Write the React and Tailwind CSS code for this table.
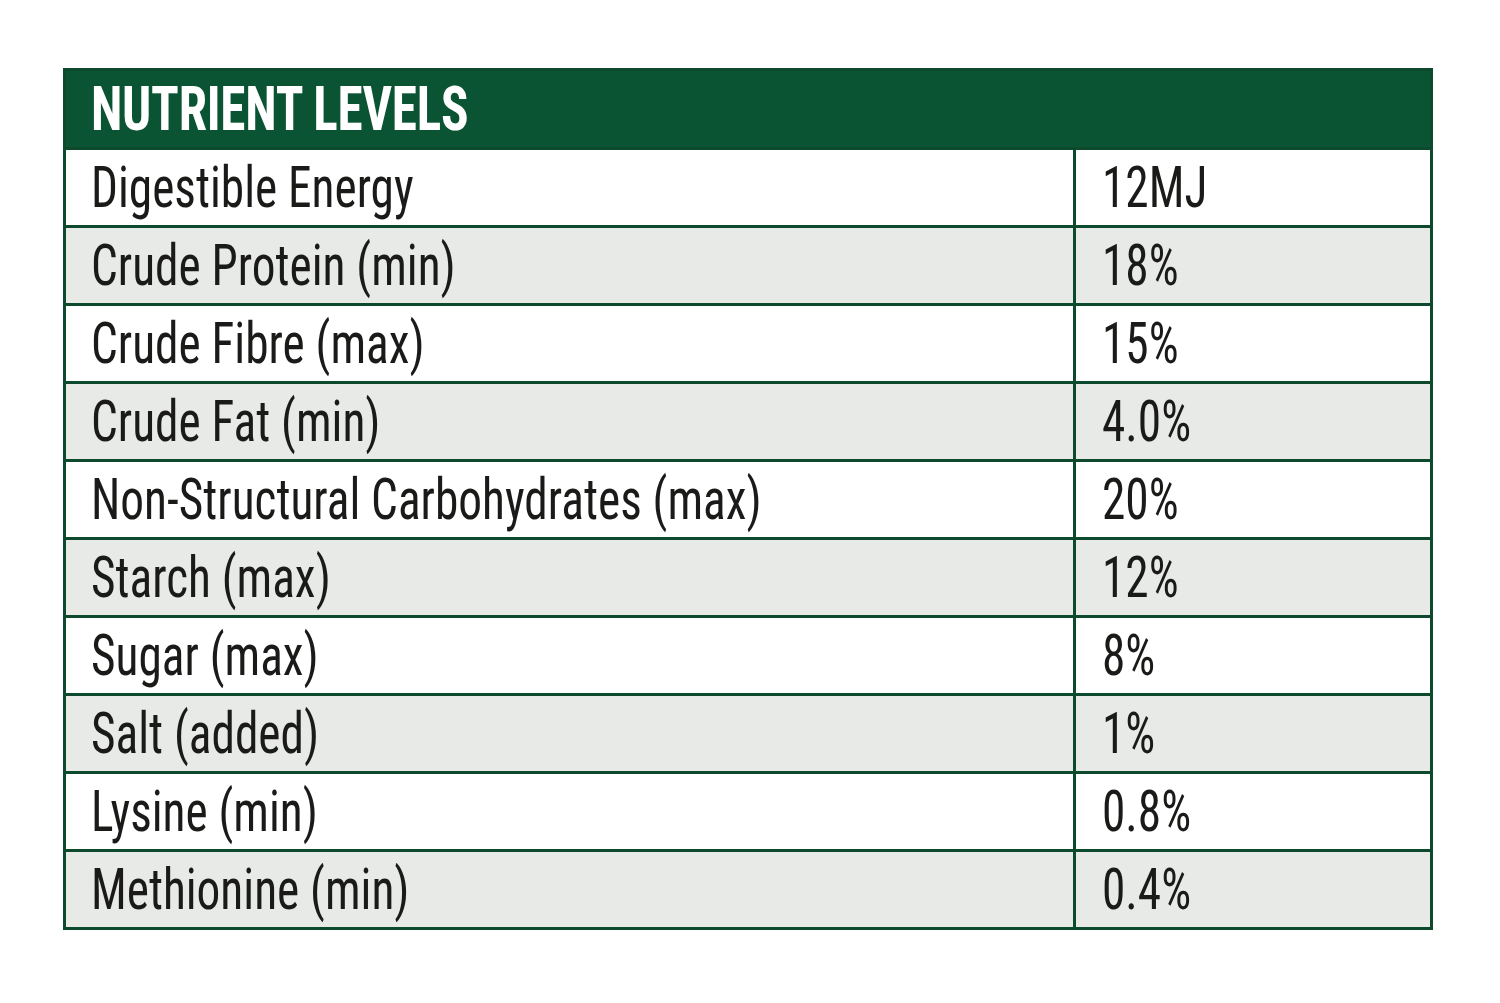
const rows = [
  ['Digestible Energy', '12MJ'],
  ['Crude Protein (min)', '18%'],
  ['Crude Fibre (max)', '15%'],
  ['Crude Fat (min)', '4.0%'],
  ['Non-Structural Carbohydrates (max)', '20%'],
  ['Starch (max)', '12%'],
  ['Sugar (max)', '8%'],
  ['Salt (added)', '1%'],
  ['Lysine (min)', '0.8%'],
  ['Methionine (min)', '0.4%'],
];

export default function App() {
  return (
    <div className="w-[1500px] h-[1003px] bg-white pt-[68px] pl-[63px] font-['Roboto_Condensed','Roboto',sans-serif] text-[#1a1a19]">
      <div className="w-[1370px] border-[3px] border-[#0d4a2d] flex flex-col">
        <div className="h-[76px] bg-[#0b5433] flex items-center pl-[25px]">
          <span className="text-[61px] leading-none font-bold text-white origin-left scale-x-[0.84] whitespace-nowrap tracking-[-0.3px]">
            NUTRIENT LEVELS
          </span>
        </div>
        {rows.map(([label, value], i) => (
          <div
            key={label}
            className={`h-[78px] border-t-[3px] border-[#0d4a2d] flex ${i % 2 === 1 ? 'bg-[#e8eae7]' : 'bg-white'}`}
          >
            <div className="w-[1010px] flex items-center pl-[25px] border-r-[3px] border-[#0d4a2d]">
              <span className="text-[57px] leading-none origin-left scale-x-[0.83] whitespace-nowrap">{label}</span>
            </div>
            <div className="flex-1 flex items-center pl-[26px]">
              <span className="text-[57px] leading-none origin-left scale-x-[0.83] whitespace-nowrap">{value}</span>
            </div>
          </div>
        ))}
      </div>
    </div>
  );
}
